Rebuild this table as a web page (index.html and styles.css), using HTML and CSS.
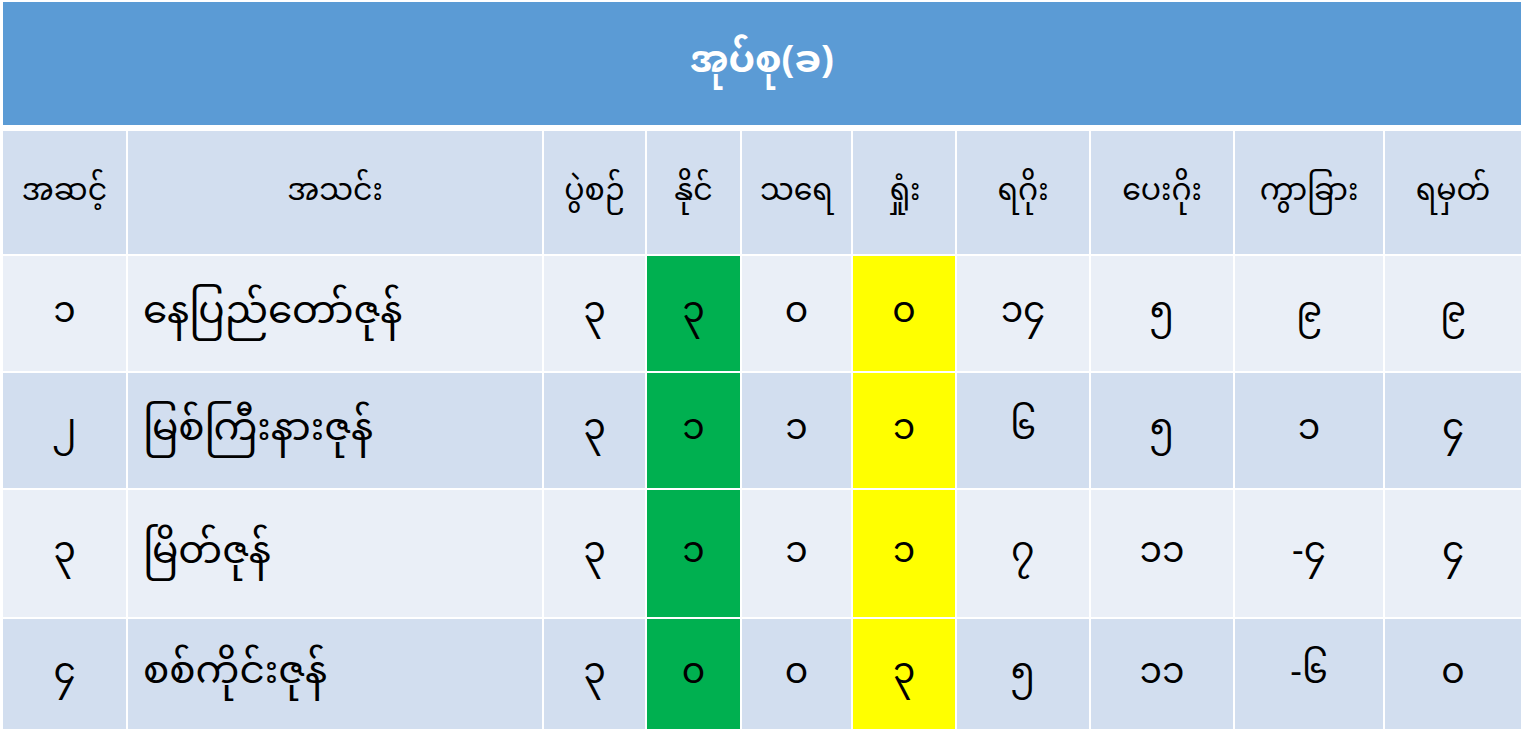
FILE: index.html
```html
<!DOCTYPE html>
<html lang="my">
<head>
<meta charset="utf-8">
<title>အုပ်စု(ခ)</title>
<link rel="stylesheet" href="styles.css">
</head>
<body>
<div class="board">
  <div class="title">အုပ်စု(ခ)</div>
  <div class="grid">
    <div class="cell head">အဆင့်</div>
    <div class="cell head">အသင်း</div>
    <div class="cell head">ပွဲစဉ်</div>
    <div class="cell head">နိုင်</div>
    <div class="cell head">သရေ</div>
    <div class="cell head">ရှုံး</div>
    <div class="cell head">ရဂိုး</div>
    <div class="cell head">ပေးဂိုး</div>
    <div class="cell head">ကွာခြား</div>
    <div class="cell head">ရမှတ်</div>

    <div class="cell light">၁</div>
    <div class="cell light name">နေပြည်တော်ဇုန်</div>
    <div class="cell light">၃</div>
    <div class="cell win">၃</div>
    <div class="cell light">၀</div>
    <div class="cell loss">၀</div>
    <div class="cell light">၁၄</div>
    <div class="cell light">၅</div>
    <div class="cell light">၉</div>
    <div class="cell light">၉</div>

    <div class="cell dark">၂</div>
    <div class="cell dark name">မြစ်ကြီးနားဇုန်</div>
    <div class="cell dark">၃</div>
    <div class="cell win">၁</div>
    <div class="cell dark">၁</div>
    <div class="cell loss">၁</div>
    <div class="cell dark">၆</div>
    <div class="cell dark">၅</div>
    <div class="cell dark">၁</div>
    <div class="cell dark">၄</div>

    <div class="cell light">၃</div>
    <div class="cell light name">မြိတ်ဇုန်</div>
    <div class="cell light">၃</div>
    <div class="cell win">၁</div>
    <div class="cell light">၁</div>
    <div class="cell loss">၁</div>
    <div class="cell light">၇</div>
    <div class="cell light">၁၁</div>
    <div class="cell light">-၄</div>
    <div class="cell light">၄</div>

    <div class="cell dark">၄</div>
    <div class="cell dark name">စစ်ကိုင်းဇုန်</div>
    <div class="cell dark">၃</div>
    <div class="cell win">၀</div>
    <div class="cell dark">၀</div>
    <div class="cell loss">၃</div>
    <div class="cell dark">၅</div>
    <div class="cell dark">၁၁</div>
    <div class="cell dark">-၆</div>
    <div class="cell dark">၀</div>
  </div>
</div>
</body>
</html>
```

FILE: styles.css
```css
html, body {
  margin: 0;
  padding: 0;
  background: #ffffff;
}

body {
  font-family: "Noto Sans Myanmar", "Padauk", "Myanmar Text", "Noto Sans", "DejaVu Sans", sans-serif;
  color: #000000;
}

.board {
  padding: 2px 5px 0 3px;
  width: 1518px;
}

.title {
  height: 123px;
  background: #5b9bd5;
  color: #ffffff;
  font-weight: bold;
  font-size: 38px;
  display: flex;
  align-items: center;
  justify-content: center;
}

.grid {
  margin-top: 6px;
  display: grid;
  grid-template-columns: 123px 414px 101px 93px 109px 102px 132px 142px 148px 136px;
  grid-template-rows: 123px 115px 115px 127px 110px;
  gap: 2px;
}

.cell {
  display: flex;
  align-items: center;
  justify-content: center;
  font-size: 36px;
}

.head {
  background: #d2deef;
  font-size: 30px;
}
.light { background: #eaeff7; }
.dark { background: #d2deef; }
.win { background: #00b050; }
.loss { background: #ffff00; }

.name {
  justify-content: flex-start;
  padding-left: 15px;
  font-size: 39px;
}
```
